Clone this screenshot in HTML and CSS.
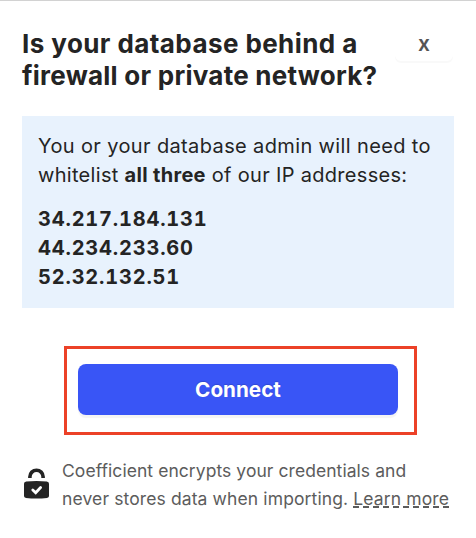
FILE: index.html
```html
<!DOCTYPE html>
<html lang="en">
	<head>
		<meta charset="UTF-8">
		<meta name="viewport" content="width=device-width, initial-scale=1.0">
		<title>Connect database</title>
		<link rel="stylesheet" href="styles.css">
	</head>
	<body>
		<main class="panel">
			<header class="header">
				<h1 class="title"><span class="title-top">Is your database behind a</span><br>firewall or private network?</h1>
				<button class="close" type="button">x</button>
			</header>

			<section class="notice">
				<p class="notice-text"><span class="notice-top">You or your database admin will need to</span><br>whitelist <b>all three</b> of our IP addresses:</p>
				<ul class="ips">
					<li>34.217.184.131</li>
					<li>44.234.233.60</li>
					<li>52.32.132.51</li>
				</ul>
			</section>

			<div class="highlight">
				<button class="connect" type="button">Connect</button>
			</div>

			<footer class="footer">
				<svg class="lock" viewBox="0 0 26 32" width="26" height="32">
					<path d="M5.9 10V8.8a6.6 6.6 0 0 1 13.2 0V10" fill="none" stroke="#242424" stroke-width="3.6"/>
					<path d="M2.2 13.6Q12.5 12.2 22.8 13.6Q25 13.9 25 15.5V28Q25 29.7 23 30Q12.5 31.2 2 30Q0 29.7 0 28V15.5Q0 13.9 2.2 13.6Z" fill="#242424"/>
					<path d="M8.8 22l2.9 2.7 4.9-5.2" fill="none" stroke="#fff" stroke-width="2.8" stroke-linecap="round"/>
				</svg>
				<p class="footer-text"><span class="footer-top">Coefficient encrypts your credentials and</span><br>never stores data when importing. <a class="more">Learn more</a></p>
			</footer>
		</main>
	</body>
</html>
```

FILE: styles.css
```css
*{
	box-sizing: border-box;
}
body{
	margin: 0;
	background-color: #fff;
	color: #242424;
	font-family: Inter, Lato, sans-serif;
}
h1, p, ul{
	margin: 0;
	padding: 0;
}
button{
	border: none;
	font-family: inherit;
}
.panel{
	height: 538px;
	padding: 27px 22px 0;
	border-top: 1px solid #d2d2d2;
}
.header{
	display: flex;
	justify-content: space-between;
	height: 88px;
}
.title{
	font-size: 26px;
	font-weight: 700;
	line-height: 32px;
	letter-spacing: 0.25px;
	white-space: nowrap;
}
.title-top{
	letter-spacing: 0.42px;
}
.close{
	width: 58px;
	height: 33px;
	margin-right: 1px;
	padding: 0 0 2px;
	border-radius: 6px;
	background-color: #fff;
	box-shadow: 0 2px 1px #f9f9f9;
	color: #555;
	font-size: 21px;
	font-weight: 600;
}
.notice{
	height: 192px;
	padding: 16px;
	background-color: #e8f2fd;
	font-size: 20px;
	line-height: 29px;
	letter-spacing: 0.31px;
	white-space: nowrap;
}
.notice-top{
	letter-spacing: 0.37px;
}
.ips{
	margin-top: 15px;
	list-style: none;
	font-weight: 750;
	font-variant-numeric: tabular-nums;
	letter-spacing: 0.8px;
}
.highlight{
	width: 353px;
	height: 89px;
	margin: 38px 0 0 42px;
	padding: 15px 11px;
	border: 3px solid #ec4128;
}
.connect{
	width: 320px;
	height: 51px;
	padding: 0;
	border-radius: 8px;
	background-color: #3955f6;
	box-shadow: 0 3px 1px #f4f4f4;
	color: #fff;
	font-size: 20.7px;
	font-weight: 650;
	text-shadow: 0 -1px 1px rgba(0, 0, 0, 0.15);
}
.footer{
	display: flex;
	gap: 12px;
	margin: 22px 0 0 2px;
	color: #5c5c5c;
	font-size: 17.5px;
	line-height: 28px;
	letter-spacing: 0.12px;
	white-space: nowrap;
}
.footer-top{
	letter-spacing: 0.06px;
}
.lock{
	flex: none;
	margin-top: 11px;
}
.more{
	background: repeating-linear-gradient(90deg, #5c5c5c 0 6px, transparent 6px 10px) left bottom 1px / 100% 2px no-repeat;
}
```
